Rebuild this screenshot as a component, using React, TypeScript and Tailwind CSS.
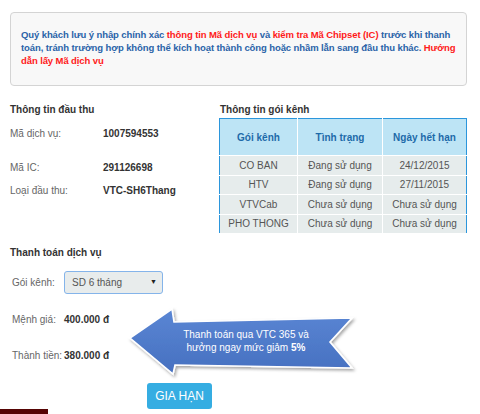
import React from 'react';

const packages = [
  { name: 'CO BAN', status: 'Đang sử dụng', expiry: '24/12/2015' },
  { name: 'HTV', status: 'Đang sử dụng', expiry: '27/11/2015' },
  { name: 'VTVCab', status: 'Chưa sử dụng', expiry: 'Chưa sử dụng' },
  { name: 'PHO THONG', status: 'Chưa sử dụng', expiry: 'Chưa sử dụng' },
];

function PromoArrow() {
  // arrow banner drawn in page coords, offset by (124, 302)
  return (
    <div className="absolute left-[124px] top-[302px] w-[240px] h-[82px]">
      <svg width="240" height="82" viewBox="124 302 240 82" className="absolute inset-0">
        <defs>
          <linearGradient id="arrowFill" x1="0" y1="0" x2="0" y2="1">
            <stop offset="0" stopColor="#5a86d4" />
            <stop offset="1" stopColor="#4670c0" />
          </linearGradient>
          <filter id="arrowShadow" x="-10%" y="-20%" width="130%" height="150%">
            <feDropShadow dx="1.5" dy="2" stdDeviation="1.5" floodColor="#000" floodOpacity="0.35" />
          </filter>
        </defs>
        <polygon
          points="130,338 172,309 174,322 352,318 330,342 352,368 175,365 173,374"
          fill="url(#arrowFill)"
          stroke="#ffffff"
          strokeWidth="1.6"
          strokeLinejoin="miter"
          filter="url(#arrowShadow)"
        />
      </svg>
      <div className="absolute left-[52px] top-[26px] w-[140px] text-center text-white text-[10px] leading-[13px]">
        Thanh toán qua VTC 365 và
        <br />
        hưởng ngay mức giảm <b>5%</b>
      </div>
    </div>
  );
}

export default function App() {
  return (
    <div className="relative w-[480px] h-[414px] overflow-hidden bg-white font-['Liberation_Sans',Arial,sans-serif]">
      {/* Notice box */}
      <div className="pt-[12px] px-[10px]">
        <div className="w-[457px] h-[74px] rounded-[4px] border border-[#d4d4d4] bg-[#f8f8f8] pl-[10px] pt-[15px] text-[9.5px] leading-[13px] tracking-[-0.1px] font-bold text-[#2a63a8] whitespace-nowrap">
          Quý khách lưu ý nhập chính xác <span className="text-[#ff1a1a]">thông tin Mã dịch vụ</span> và{' '}
          <span className="text-[#ff1a1a]">kiểm tra Mã Chipset (IC)</span> trước khi thanh
          <br />
          toán, tránh trường hợp không thể kích hoạt thành công hoặc nhầm lẫn sang đầu thu khác.{' '}
          <span className="text-[#ff1a1a]">Hướng</span>
          <br />
          <span className="text-[#ff1a1a]">dẫn lấy Mã dịch vụ</span>
        </div>
      </div>

      {/* Receiver + package info */}
      <div className="mt-[16px] flex h-[131px] pl-[10px]">
        <div className="w-[209px]">
          <div className="h-[16px] text-[10px] leading-[16px] font-bold text-[#333]">Thông tin đầu thu</div>
          <div className="mt-[7px] flex h-[16px] items-center text-[10px]">
            <span className="w-[93px] text-[#666]">Mã dịch vụ:</span>
            <span className="font-bold text-[#333]">1007594553</span>
          </div>
          <div className="mt-[18px] flex h-[16px] items-center text-[10px]">
            <span className="w-[93px] text-[#666]">Mã IC:</span>
            <span className="font-bold text-[#333]">291126698</span>
          </div>
          <div className="mt-[7px] flex h-[16px] items-center text-[10px]">
            <span className="w-[93px] text-[#666]">Loại đầu thu:</span>
            <span className="font-bold text-[#333]">VTC-SH6Thang</span>
          </div>
        </div>

        <div className="w-[248px]">
          <div className="h-[16px] pl-[1px] text-[10px] leading-[16px] font-bold text-[#333]">Thông tin gói kênh</div>
          <table className="w-[248px] border-collapse border-[1.5px] border-[#2b96dc] text-[10px] text-center">
            <thead>
              <tr className="h-[37px] bg-[#bde4f5] text-[#1d6aa9] font-bold">
                <th className="w-[78px] border border-white border-l-0 border-t-0 font-bold">Gói kênh</th>
                <th className="w-[85px] border border-white border-t-0 font-bold">Tình trạng</th>
                <th className="border border-white border-r-0 border-t-0 font-bold">Ngày hết hạn</th>
              </tr>
            </thead>
            <tbody className="text-[#555]">
              {packages.map((p) => (
                <tr key={p.name} className="h-[19.5px] bg-[#e6ecec]">
                  <td className="border border-white border-l-0">{p.name}</td>
                  <td className="border border-white">{p.status}</td>
                  <td className="border border-white border-r-0">{p.expiry}</td>
                </tr>
              ))}
            </tbody>
          </table>
        </div>
      </div>

      {/* Payment */}
      <div className="mt-[12px] pl-[10px]">
        <div className="h-[16px] text-[10px] leading-[16px] font-bold text-[#333]">Thanh toán dịch vụ</div>
        <div className="mt-[10px] flex h-[23px] items-center pl-[2px] text-[10px] text-[#666]">
          <span className="w-[52px]">Gói kênh:</span>
          <div className="flex h-[23px] w-[99px] items-center justify-between rounded-[3px] border border-[#84b4ea] bg-[#e8ecec] pl-[7px] pr-[5px] text-[#555]">
            <span>SD 6 tháng</span>
            <span className="text-[7px] text-[#222]">▼</span>
          </div>
        </div>
        <div className="mt-[17px] flex h-[16px] items-center pl-[2px] text-[10px]">
          <span className="w-[52px] text-[#666]">Mệnh giá:</span>
          <span className="font-bold text-[#333]">400.000 đ</span>
        </div>
        <div className="mt-[20px] flex h-[16px] items-center pl-[2px] text-[10px]">
          <span className="mr-[2px] text-[#666]">Thành tiền:</span>
          <span className="font-bold text-[#333]">380.000 đ</span>
        </div>
        <div className="mt-[20px] pl-[137px]">
          <button className="h-[26px] w-[65px] rounded-[3px] bg-[#35ade2] text-[12px] text-white">GIA HẠN</button>
        </div>
      </div>
      <div className="h-[5px] w-[48px] bg-[#560404]" />

      <PromoArrow />
    </div>
  );
}
